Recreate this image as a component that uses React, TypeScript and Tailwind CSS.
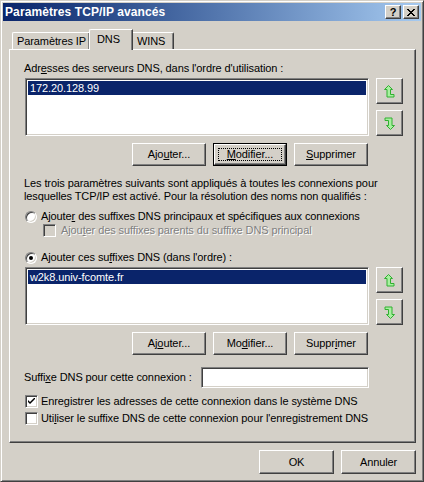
import type { ReactNode } from "react";

const raised =
  "border border-t-white border-l-white border-r-[#404040] border-b-[#404040] shadow-[inset_-1px_-1px_0_#808080]";
const sunken =
  "border border-t-[#808080] border-l-[#808080] border-r-white border-b-white shadow-[inset_1px_1px_0_#404040,inset_-1px_-1px_0_#d4d0c8]";

const Btn = ({
  children,
  focused,
  className = "",
}: {
  children: ReactNode;
  focused?: boolean;
  className?: string;
}) =>
  focused ? (
    <div className={`h-[23px] border border-black ${className}`}>
      <div className={`h-full w-full flex items-center justify-center p-[3px] ${raised}`}>
        <div className="h-full w-full flex items-center justify-center border border-dotted border-black">
          {children}
        </div>
      </div>
    </div>
  ) : (
    <div className={`h-[23px] flex items-center justify-center ${raised} ${className}`}>
      {children}
    </div>
  );

const ArrowIcon = ({ down }: { down?: boolean }) => (
  <svg
    width="11"
    height="13"
    viewBox="0 0 11 13"
    className={down ? "rotate-180" : ""}
  >
    <polygon
      points="4.5,0.5 8.5,4.5 6.5,4.5 6.5,9.5 10,9.5 10,12 3,12 3,4.5 0.5,4.5"
      fill="#a8f0a0"
      stroke="#30b030"
      strokeWidth="1"
      strokeLinejoin="miter"
    />
  </svg>
);

const ArrowButtons = () => (
  <div className="flex flex-col gap-[6px] ml-[7px]">
    <div className={`w-[27px] h-[26px] flex items-center justify-center ${raised}`}>
      <ArrowIcon />
    </div>
    <div className={`w-[27px] h-[26px] flex items-center justify-center ${raised}`}>
      <ArrowIcon down />
    </div>
  </div>
);

const Radio = ({ checked }: { checked?: boolean }) => (
  <div className="w-[12px] h-[12px] rounded-full border border-t-[#808080] border-l-[#808080] border-r-white border-b-white bg-white shadow-[inset_1px_1px_0_#404040,inset_-1px_-1px_0_#d4d0c8] flex items-center justify-center shrink-0">
    {checked && <div className="w-[4px] h-[4px] rounded-full bg-black" />}
  </div>
);

const Check = ({ checked, disabled }: { checked?: boolean; disabled?: boolean }) => (
  <div
    className={`w-[13px] h-[13px] ${sunken} ${disabled ? "bg-[#d4d0c8]" : "bg-white"} flex items-center justify-center shrink-0`}
  >
    {checked && (
      <svg width="7" height="7" viewBox="0 0 7 7">
        <path d="M0 2 L0 4 L2 6 L7 1 L7 -1 L2 4 Z" fill="black" />
      </svg>
    )}
  </div>
);

const ListBox = ({ value }: { value: string }) => (
  <div className={`w-[344px] h-[58px] bg-white p-[2px] ${sunken}`}>
    <div className="h-[14px] bg-[#0a246a] text-white pl-[2px] leading-[14px]">{value}</div>
  </div>
);

const ButtonRow = ({ row2 }: { row2?: boolean }) => (
  <div className="flex gap-[7px] ml-[108px] mt-[7px]">
    <Btn className="w-[74px]">
      {row2 ? (
        <span>
          Aj<u>o</u>uter...
        </span>
      ) : (
        <span>
          Ajo<u>u</u>ter...
        </span>
      )}
    </Btn>
    {row2 ? (
      <Btn className="w-[74px]">
        <span>
          Mo<u>d</u>ifier...
        </span>
      </Btn>
    ) : (
      <Btn focused className="w-[74px]">
        <span>
          <u>M</u>odifier...
        </span>
      </Btn>
    )}
    <Btn className="w-[74px]">
      {row2 ? (
        <span>
          Suppr<u>i</u>mer
        </span>
      ) : (
        <span>
          <u>S</u>upprimer
        </span>
      )}
    </Btn>
  </div>
);

export default function App() {
  return (
    <div
      className="w-[424px] h-[482px] bg-[#d4d0c8] border border-t-[#d4d0c8] border-l-[#d4d0c8] border-r-[#404040] border-b-[#404040] shadow-[inset_1px_1px_0_white,inset_-1px_-1px_0_#808080] p-[2px] flex flex-col text-[11px] leading-[13px] tracking-[-0.1px] text-black select-none"
      style={{ fontFamily: '"Liberation Sans", Arial, sans-serif' }}
    >
      {/* Title bar */}
      <div className="h-[18px] shrink-0 bg-linear-to-r from-[#0a246a] to-[#a6caf0] flex items-center pl-[2px] pr-[2px]">
        <span className="text-white font-bold text-[12px] tracking-[0.1px]">Paramètres TCP/IP avancés</span>
        <div className="ml-auto flex">
          <div className={`w-[16px] h-[14px] bg-[#d4d0c8] flex items-center justify-center font-bold text-[11px] leading-none ${raised}`}>
            ?
          </div>
          <div className={`w-[16px] h-[14px] ml-[2px] bg-[#d4d0c8] flex items-center justify-center ${raised}`}>
            <svg width="8" height="7" viewBox="0 0 8 7">
              <path d="M0.5 0 L7.5 7 M1.5 0 L8.5 7 M7.5 0 L0.5 7 M8.5 0 L1.5 7" stroke="black" strokeWidth="1" transform="translate(-0.5 0)" />
            </svg>
          </div>
        </div>
      </div>

      {/* Tabs */}
      <div className="ml-[6px] mt-[8px] h-[20px] flex items-end pl-[3px] relative z-10">
        <div className="w-[78px] h-[17px] border-t border-l border-t-white border-l-white border-r border-r-[#404040] shadow-[inset_-1px_0_0_#808080] rounded-tl-[2px] pl-[4px] pt-[2px] whitespace-nowrap">
          Paramètres IP
        </div>
        <div className="w-[44px] h-[21px] -mb-px -ml-px bg-[#d4d0c8] border-t border-l border-t-white border-l-white border-r border-r-[#404040] shadow-[inset_-1px_0_0_#808080] rounded-tl-[2px] pl-[7px] pt-[3px]">
          DNS
        </div>
        <div className="w-[41px] h-[17px] border-t border-t-white border-r border-r-[#404040] shadow-[inset_-1px_0_0_#808080] rounded-tr-[2px] pl-[4px] pt-[2px]">
          WINS
        </div>
      </div>

      {/* Panel */}
      <div className="ml-[6px] w-[407px] h-[394px] border border-t-white border-l-white border-r-[#404040] border-b-[#404040] shadow-[inset_-1px_-1px_0_#808080] flex flex-col pl-[14px]">
        <div className="mt-[12px]">
          Adr<u>e</u>sses des serveurs DNS, dans l'ordre d'utilisation :
        </div>
        <div className="flex mt-[3px] ml-px">
          <ListBox value="172.20.128.99" />
          <ArrowButtons />
        </div>
        <ButtonRow />

        <div className="mt-[11px] w-[370px]">
          Les trois paramètres suivants sont appliqués à toutes les connexions pour lesquelles TCP/IP est activé. Pour la
          résolution des noms non qualifiés :
        </div>

        <div className="mt-[7px] ml-px flex items-center gap-[4px] h-[13px]">
          <Radio />
          <span>
            Ajoute<u>r</u> des suffixes DNS principaux et spécifiques aux connexions
          </span>
        </div>
        <div className="mt-[1px] ml-[19px] flex items-center gap-[5px] h-[13px]">
          <Check disabled />
          <span className="text-[#808080] [text-shadow:1px_1px_0_white]">
            Ajou<u>t</u>er des suffixes parents du suffixe DNS principal
          </span>
        </div>
        <div className="mt-[14px] ml-px flex items-center gap-[4px] h-[13px]">
          <Radio checked />
          <span>
            Ajouter ces su<u>f</u>fixes DNS (dans l'ordre) :
          </span>
        </div>

        <div className="flex mt-[3px] ml-px">
          <ListBox value="w2k8.univ-fcomte.fr" />
          <ArrowButtons />
        </div>
        <ButtonRow row2 />

        <div className="mt-[12px] flex items-center">
          <span>
            Suffi<u>x</u>e DNS pour cette connexion :
          </span>
          <div className={`ml-auto mr-[46px] w-[168px] h-[21px] bg-white ${sunken}`} />
        </div>

        <div className="mt-[7px] ml-px flex items-center gap-[3px] h-[13px]">
          <Check checked />
          <span>
            Enre<u>g</u>istrer les adresses de cette connexion dans le système DNS
          </span>
        </div>
        <div className="mt-[4px] ml-px flex items-center gap-[3px] h-[13px]">
          <Check />
          <span>
            Uti<u>l</u>iser le suffixe DNS de cette connexion pour l'enregistrement DNS
          </span>
        </div>
      </div>

      {/* Bottom buttons */}
      <div className="flex justify-end gap-[7px] mt-[7px] mr-[5px]">
        <Btn className="w-[75px] h-[24px]">OK</Btn>
        <Btn className="w-[75px] h-[24px]">Annuler</Btn>
      </div>
    </div>
  );
}
